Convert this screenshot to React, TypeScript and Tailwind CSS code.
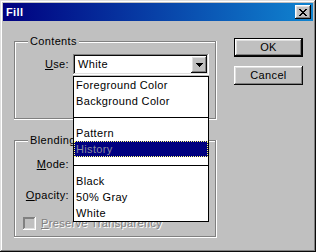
import React from "react";

const raised =
  "shadow-[inset_-1px_-1px_#0a0a0a,inset_1px_1px_#ffffff,inset_-2px_-2px_#808080,inset_2px_2px_#dfdfdf]";
const sunken =
  "shadow-[inset_-1px_-1px_#ffffff,inset_1px_1px_#808080,inset_-2px_-2px_#dfdfdf,inset_2px_2px_#0a0a0a]";
const etched =
  "shadow-[inset_-1px_-1px_#ffffff,inset_1px_1px_#808080,inset_-2px_-2px_#808080,inset_2px_2px_#ffffff]";

function CloseGlyph() {
  const rows = ["XX....XX", ".XX..XX.", "..XXXX..", "...XX...", "..XXXX..", ".XX..XX.", "XX....XX"];
  return (
    <svg width="8" height="7" viewBox="0 0 8 7" shapeRendering="crispEdges">
      {rows.map((r, y) =>
        r.split("").map((c, x) => (c === "X" ? <rect key={`${x}-${y}`} x={x} y={y} width="1" height="1" fill="#000" /> : null))
      )}
    </svg>
  );
}

function Arrow() {
  return (
    <svg width="7" height="4" viewBox="0 0 7 4" shapeRendering="crispEdges">
      <rect x="0" y="0" width="7" height="1" fill="#000" />
      <rect x="1" y="1" width="5" height="1" fill="#000" />
      <rect x="2" y="2" width="3" height="1" fill="#000" />
      <rect x="3" y="3" width="1" height="1" fill="#000" />
    </svg>
  );
}

function Combo({ value }: { value: string }) {
  return (
    <div className={`w-[136px] h-[21px] bg-white flex items-center p-[2px] ${sunken}`}>
      <div className="flex-1 pl-[3px] leading-[17px]">{value}</div>
      <div className={`w-[16px] h-[17px] bg-[#c0c0c0] flex items-center justify-center ${raised}`}>
        <Arrow />
      </div>
    </div>
  );
}

const items: { label?: string; sep?: boolean; selected?: boolean }[] = [
  { label: "Foreground Color" },
  { label: "Background Color" },
  { sep: true },
  { label: "Pattern" },
  { label: "History", selected: true },
  { sep: true },
  { label: "Black" },
  { label: "50% Gray" },
  { label: "White" },
];

function DropList() {
  return (
    <div className="absolute left-0 top-[22px] z-10 w-[136px] border border-black bg-white">
      {items.map((it, i) =>
        it.sep ? (
          <div key={i} className="h-[16px] flex items-center">
            <div className="w-full h-px bg-black" />
          </div>
        ) : it.selected ? (
          <div
            key={i}
            className="h-[16px] bg-[#000080] border border-dotted border-[#ffff7f] pl-[1px] leading-[14px] text-[#8a8aa0]"
          >
            {it.label}
          </div>
        ) : (
          <div key={i} className="h-[16px] pl-[2px] leading-[16px]">
            {it.label}
          </div>
        )
      )}
    </div>
  );
}

function GroupLabel({ text }: { text: string }) {
  return (
    <div className="absolute left-[14px] top-[-6px] px-[2px] bg-[#c0c0c0] leading-[13px]">{text}</div>
  );
}

function Btn({ label, def }: { label: string; def?: boolean }) {
  if (def) {
    return (
      <div className="w-[69px] h-[19px] border border-black">
        <div className={`w-full h-full flex items-center justify-center ${raised}`}>{label}</div>
      </div>
    );
  }
  return <div className={`w-[69px] h-[19px] flex items-center justify-center ${raised}`}>{label}</div>;
}

export default function App() {
  return (
    <div
      className={`w-[316px] h-[252px] bg-[#c0c0c0] p-[3px] text-[11px] tracking-[0.35px] text-black font-['Liberation_Sans',Arial,sans-serif] select-none shadow-[inset_-1px_-1px_#0a0a0a,inset_1px_1px_#dfdfdf,inset_-2px_-2px_#808080,inset_2px_2px_#ffffff]`}
    >
      <div className="h-[18px] flex items-center justify-between pl-[3px] pr-[2px] bg-[linear-gradient(90deg,#000080,#1084d0)]">
        <span className="text-white font-bold leading-[13px]">Fill</span>
        <div className={`w-[16px] h-[14px] bg-[#c0c0c0] flex items-center justify-center ${raised}`}>
          <CloseGlyph />
        </div>
      </div>
      <div className="flex">
        <div className="ml-[11px] mt-[20px] w-[203px] flex flex-col">
          <div className={`relative h-[79px] pt-[13px] ${etched}`}>
            <GroupLabel text="Contents" />
            <div className="flex items-center">
              <div className="w-[55px] mr-[4px] text-right">
                <span className="underline">U</span>se:
              </div>
              <div className="relative">
                <Combo value="White" />
                <DropList />
              </div>
            </div>
          </div>
          <div className={`relative mt-[20px] h-[98px] pt-[14px] ${etched}`}>
            <GroupLabel text="Blending" />
            <div className="flex items-center">
              <div className="w-[55px] mr-[4px] text-right">
                <span className="underline">M</span>ode:
              </div>
              <Combo value="Normal" />
            </div>
            <div className="flex items-center mt-[10px]">
              <div className="w-[55px] mr-[4px] text-right">
                <span className="underline">O</span>pacity:
              </div>
              <div className={`w-[40px] h-[21px] bg-white ${sunken}`} />
            </div>
            <div className="flex items-center mt-[11px] pl-[9px]">
              <div
                className={`w-[13px] h-[13px] bg-[#c0c0c0] shadow-[inset_-1px_-1px_#ffffff,inset_1px_1px_#808080,inset_-2px_-2px_#dfdfdf,inset_2px_2px_#808080]`}
              />
              <span className="ml-[5px] text-[#808080] [text-shadow:1px_1px_0_#ffffff] leading-[13px]">
                <span className="underline">P</span>reserve Transparency
              </span>
            </div>
          </div>
        </div>
        <div className="ml-[17px] mt-[17px] flex flex-col gap-[9px]">
          <Btn label="OK" def />
          <Btn label="Cancel" />
        </div>
      </div>
    </div>
  );
}
